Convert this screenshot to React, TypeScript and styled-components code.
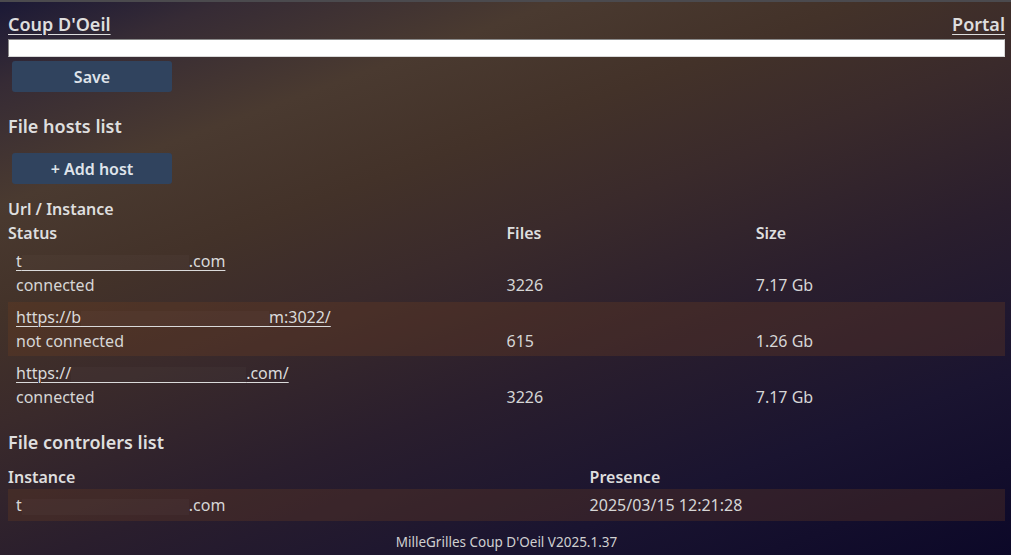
import React from "react";
import styled, { createGlobalStyle } from "styled-components";

const GlobalStyle = createGlobalStyle`
  html, body {
    margin: 0;
    padding: 0;
    height: 100%;
  }
  body {
    font-family: "Noto Sans", "Open Sans", sans-serif;
    color: #dcdcdc;
    background: #1a1530;
  }
`;

type Host = {
  prefix: string;
  masked: number;
  suffix: string;
  status: string;
  files: string;
  size: string;
};

const hosts: Host[] = [
  { prefix: "t", masked: 167, suffix: ".com", status: "connected", files: "3226", size: "7.17 Gb" },
  { prefix: "https://b", masked: 188, suffix: "m:3022/", status: "not connected", files: "615", size: "1.26 Gb" },
  { prefix: "https://", masked: 175, suffix: ".com/", status: "connected", files: "3226", size: "7.17 Gb" },
];

const App: React.FC = () => {
  return (
    <>
      <GlobalStyle />
      <Page>
        <Header>
          <TitleLink href="#">Coup D'Oeil</TitleLink>
          <TitleLink href="#">Portal</TitleLink>
        </Header>
        <TextInput type="text" defaultValue="" />
        <Button type="button">Save</Button>

        <SectionTitle $top={21} $bottom={10}>File hosts list</SectionTitle>
        <Button type="button">+ Add host</Button>

        <HostGrid>
          <HeadCell $span>Url / Instance</HeadCell>
          <HeadCell>Status</HeadCell>
          <HeadCell>Files</HeadCell>
          <HeadCell>Size</HeadCell>
        </HostGrid>
        <Rows>
          {hosts.map((h, i) => (
            <HostRow key={i} $odd={i % 2 === 1}>
              <UrlCell>
                <RowLink href="#">
                  {h.prefix}
                  <Mask $width={h.masked} $underline />
                  {h.suffix}
                </RowLink>
              </UrlCell>
              <StatusCell>{h.status}</StatusCell>
              <Cell>{h.files}</Cell>
              <Cell>{h.size}</Cell>
            </HostRow>
          ))}
        </Rows>

        <SectionTitle $top={17} $bottom={10}>File controlers list</SectionTitle>
        <ControllerGrid>
          <HeadCell>Instance</HeadCell>
          <HeadCell>Presence</HeadCell>
        </ControllerGrid>
        <ControllerRow>
          <StatusCell>
            t<Mask $width={167} />.com
          </StatusCell>
          <Cell>2025/03/15 12:21:28</Cell>
        </ControllerRow>

        <Footer>MilleGrilles Coup D'Oeil V2025.1.37</Footer>
      </Page>
    </>
  );
};

export default App;

const Page = styled.div`
  min-height: 555px;
  box-sizing: border-box;
  border-top: 2px solid #4b4a4e;
  padding: 10px 6px 0 8px;
  background: linear-gradient(
    160deg,
    #1b1936 0%,
    #362b35 9%,
    #4a3a30 22%,
    #433229 34%,
    #3a2a2b 46%,
    #2a1e2d 62%,
    #1a1430 80%,
    #0c0828 100%
  );
  display: flex;
  flex-direction: column;
`;

const Header = styled.div`
  display: flex;
  justify-content: space-between;
  align-items: baseline;
  height: 27px;
`;

const TitleLink = styled.a`
  color: #dedede;
  font-size: 18px;
  font-weight: 600;
  text-decoration: underline;
  text-underline-offset: 3px;
  line-height: 24px;
`;

const TextInput = styled.input`
  box-sizing: border-box;
  width: 100%;
  height: 18px;
  margin: 0;
  padding: 0 4px;
  border: 1px solid #8a8a8a;
  border-right-color: #d8d8d8;
  border-bottom-color: #d8d8d8;
  background: #ffffff;
  outline: none;
`;

const Button = styled.button`
  align-self: flex-start;
  width: 160px;
  height: 31px;
  margin: 4px 0 0 4px;
  border: none;
  border-radius: 3px;
  background: #30435e;
  color: #dfe3ea;
  font-family: inherit;
  font-size: 16px;
  font-weight: 600;
  cursor: pointer;
`;

const SectionTitle = styled.h2<{ $top: number; $bottom: number }>`
  margin: ${({ $top, $bottom }) => `${$top}px 0 ${$bottom}px`};
  font-size: 18px;
  font-weight: 600;
  line-height: 26px;
  color: #dedede;
`;

const HostGrid = styled.div`
  display: grid;
  grid-template-columns: 6fr 3fr 3fr;
  margin-top: 13px;
`;

const HeadCell = styled.div<{ $span?: boolean }>`
  grid-column: ${({ $span }) => ($span ? "1 / -1" : "auto")};
  font-size: 16px;
  font-weight: 600;
  line-height: 24px;
  color: #dedede;
`;

const Rows = styled.div`
  display: flex;
  flex-direction: column;
  gap: 2px;
  margin-top: 1px;
`;

const HostRow = styled.div<{ $odd: boolean }>`
  display: grid;
  grid-template-columns: 6fr 3fr 3fr;
  padding: 3px 0;
  background: ${({ $odd }) => ($odd ? "rgba(110, 62, 34, 0.32)" : "transparent")};
`;

const Cell = styled.div`
  font-size: 16px;
  line-height: 24px;
  color: #d6d6d6;
`;

const UrlCell = styled(Cell)`
  grid-column: 1 / -1;
  padding-left: 8px;
`;

const StatusCell = styled(Cell)`
  padding-left: 8px;
`;

const RowLink = styled.a`
  color: #dadada;
  text-decoration: underline;
  text-underline-offset: 3px;
  text-decoration-thickness: 1px;
`;

const Mask = styled.span<{ $width: number; $underline?: boolean }>`
  display: inline-block;
  width: ${({ $width }) => $width}px;
  height: 16px;
  vertical-align: -4px;
  box-sizing: border-box;
  background: rgba(255, 255, 255, 0.025);
  border-bottom: ${({ $underline }) => ($underline ? "1px solid #dadada" : "none")};
`;

const ControllerGrid = styled.div`
  display: grid;
  grid-template-columns: 7fr 5fr;
`;

const ControllerRow = styled.div`
  display: grid;
  grid-template-columns: 7fr 5fr;
  padding: 4px 0;
  background: rgba(110, 62, 34, 0.3);
`;

const Footer = styled.div`
  text-align: center;
  font-size: 13.5px;
  line-height: 20px;
  color: #d0d0d0;
  margin-top: 11px;
`;
